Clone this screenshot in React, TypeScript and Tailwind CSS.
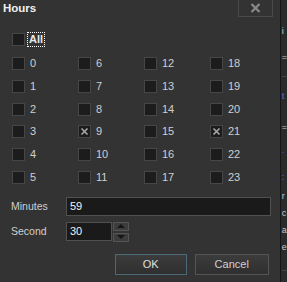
import React from 'react';

const font = "font-['Liberation_Sans',Arial,sans-serif]";

const hours = Array.from({ length: 24 }, (_, i) => i);
const checked = [9, 21];

const Box = ({ on }: { on?: boolean }) => (
  <div className="w-[13px] h-[13px] shrink-0 border border-[#464646] bg-[#1c1c1c] flex items-center justify-center">
    {on && (
      <svg width="9" height="9" viewBox="0 0 9 9">
        <path d="M1.5 1.5 L7.5 7.5 M7.5 1.5 L1.5 7.5" stroke="#a8a8a8" strokeWidth="1.6" />
      </svg>
    )}
  </div>
);

const Arrow = ({ up }: { up?: boolean }) => (
  <div className="w-[16px] h-[9px] border border-[#555] bg-[#3c3c3c] flex items-center justify-center">
    <svg width="8" height="4" viewBox="0 0 8 4">
      <path d={up ? 'M0 4 L4 0 L8 4 Z' : 'M0 0 L8 0 L4 4 Z'} fill="#151515" />
    </svg>
  </div>
);

export default function App() {
  return (
    <div className={`w-[287px] h-[282px] flex bg-[#2b2b2b] overflow-hidden ${font}`}>
      <div className="w-[283px] h-full bg-[#333333] border-r border-[#151515] flex flex-col">
        {/* title */}
        <div className="h-[17px] flex items-start">
          <span className="pl-[3px] pt-[1px] text-[11.5px] font-bold leading-[14px] text-[#f0f0f0]">Hours</span>
          <div className="ml-auto mr-[7px] w-[35px] h-[17px] border border-[#4a4a4a] border-t-0 flex items-center justify-center">
            <svg width="11" height="10" viewBox="0 0 11 10">
              <path d="M1.5 1 L9.5 9 M9.5 1 L1.5 9" stroke="#8a8a8a" strokeWidth="2.2" />
            </svg>
          </div>
        </div>

        {/* all */}
        <div className="mt-[15px] pl-[12px] flex items-center gap-[2px]">
          <Box />
          <span className="px-[1px] border border-dotted border-white text-[11px] font-bold leading-[13px] text-[#e8e8e8]">All</span>
        </div>

        {/* grid */}
        <div className="mt-[10px] pl-[12px] grid grid-flow-col grid-rows-6 grid-cols-[66px_66px_66px_66px] gap-y-[9.8px]">
          {hours.map((h) => (
            <div key={h} className="flex items-center gap-[5px] h-[13px]">
              <Box on={checked.includes(h)} />
              <span className="text-[11px] leading-[13px] text-[#cfcfcf]">{h}</span>
            </div>
          ))}
        </div>

        {/* minutes */}
        <div className="mt-[13px] flex items-center">
          <span className="w-[66px] pl-[11px] text-[10.5px] text-[#cfcfcf]">Minutes</span>
          <div className="w-[205px] h-[19px] border border-[#505050] bg-[#1a1a1a] pl-[3px] text-[11px] leading-[17px] text-[#f2f2f2]">59</div>
        </div>

        {/* second */}
        <div className="mt-[6px] flex items-center">
          <span className="w-[66px] pl-[11px] text-[10.5px] text-[#cfcfcf]">Second</span>
          <div className="w-[46px] h-[19px] border border-[#505050] bg-[#1a1a1a] pl-[3px] text-[11px] leading-[17px] text-[#f2f2f2]">30</div>
          <div className="ml-[1px] flex flex-col gap-[2px]">
            <Arrow up />
            <Arrow />
          </div>
        </div>

        {/* buttons */}
        <div className="mt-[12px] pr-[11px] flex justify-end gap-[8px]">
          <button className="w-[72px] h-[21px] border border-[#4a6a78] bg-gradient-to-b from-[#3c3c3c] to-[#2f2f2f] text-[11px] text-[#e0e0e0]">OK</button>
          <button className="w-[74px] h-[21px] border border-[#555] bg-gradient-to-b from-[#3c3c3c] to-[#2f2f2f] text-[11px] text-[#d0d0d0]">Cancel</button>
        </div>
      </div>

      {/* sliver of the window behind */}
      <div className="flex-1 flex flex-col text-[9px] leading-none text-[#c8c8c8] pl-[1px]">
        <span className="mt-[27px]">i</span>
        <span className="mt-[17px]">=</span>
        <div className="mt-[14px] h-px bg-[#444]" />
        <span className="mt-[15px] text-[#6a72b8]">t</span>
        <span className="mt-[22px]">=</span>
        <span className="mt-[14px] text-[#5a64a8]">.</span>
        <span className="mt-[18px] text-[#6a72b8]">:</span>
        <span className="mt-[10px]">r</span>
        <span className="mt-[8px]">c</span>
        <span className="mt-[8px]">a</span>
        <span className="mt-[8px]">e</span>
        <div className="mt-[18px] h-px bg-[#444]" />
      </div>
    </div>
  );
}
